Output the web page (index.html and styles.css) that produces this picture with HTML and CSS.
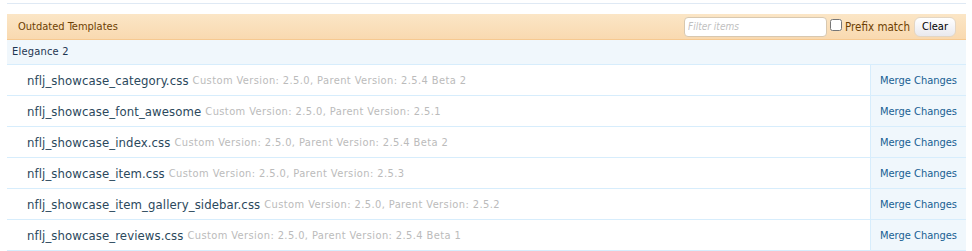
FILE: index.html
```html
<!DOCTYPE html>
<html lang="en">
<head>
  <meta charset="UTF-8" />
  <title>Outdated Templates</title>
  <link rel="stylesheet" href="styles.css">
</head>
<body>
  <div class="topline"></div>

  <div class="block">
    <div class="blockHead">
      <span class="blockTitle">Outdated Templates</span>
      <div class="filter">
        <input type="text" class="filterInput" placeholder="Filter items">
        <label class="prefix"><input type="checkbox"> Prefix match</label>
        <button class="clearBtn">Clear</button>
      </div>
    </div>

    <div class="groupHead">Elegance 2</div>

    <ol class="list">
      <li class="item">
        <div class="itemMain"><a class="name" href="#">nflj_showcase_category.css</a> <span class="meta">Custom Version: 2.5.0, Parent Version: 2.5.4 Beta 2</span></div>
        <a class="action" href="#">Merge Changes</a>
      </li>
      <li class="item">
        <div class="itemMain"><a class="name" href="#">nflj_showcase_font_awesome</a> <span class="meta">Custom Version: 2.5.0, Parent Version: 2.5.1</span></div>
        <a class="action" href="#">Merge Changes</a>
      </li>
      <li class="item">
        <div class="itemMain"><a class="name" href="#">nflj_showcase_index.css</a> <span class="meta">Custom Version: 2.5.0, Parent Version: 2.5.4 Beta 2</span></div>
        <a class="action" href="#">Merge Changes</a>
      </li>
      <li class="item">
        <div class="itemMain"><a class="name" href="#">nflj_showcase_item.css</a> <span class="meta">Custom Version: 2.5.0, Parent Version: 2.5.3</span></div>
        <a class="action" href="#">Merge Changes</a>
      </li>
      <li class="item">
        <div class="itemMain"><a class="name" href="#">nflj_showcase_item_gallery_sidebar.css</a> <span class="meta">Custom Version: 2.5.0, Parent Version: 2.5.2</span></div>
        <a class="action" href="#">Merge Changes</a>
      </li>
      <li class="item">
        <div class="itemMain"><a class="name" href="#">nflj_showcase_reviews.css</a> <span class="meta">Custom Version: 2.5.0, Parent Version: 2.5.4 Beta 1</span></div>
        <a class="action" href="#">Merge Changes</a>
      </li>
    </ol>
  </div>
</body>
</html>
```

FILE: styles.css
```css
body {
  margin: 0;
  padding: 0 6px 0 7px;
  background: #fff;
  font-family: 'DejaVu Sans Condensed', 'DejaVu Sans', sans-serif;
  font-size: 11px;
  color: #2d2d2d;
}

a {
  text-decoration: none;
}

.topline {
  height: 3px;
  border-bottom: 1px solid #dfe9f4;
}

.block {
  margin-top: 10px;
}

.blockHead {
  display: flex;
  align-items: center;
  justify-content: space-between;
  height: 25px;
  padding: 0 10px 0 11px;
  background: linear-gradient(#fbe6c6, #f9d9b0);
  border-bottom: 1px solid #f6c991;
}

.blockTitle {
  color: #6d3f03;
}

.filter {
  display: flex;
  align-items: center;
}

.filterInput {
  box-sizing: border-box;
  width: 143px;
  height: 20px;
  margin: 0;
  padding: 1px 3px;
  border: 1px solid #d8c8b0;
  border-radius: 4px;
  background: #fff;
  font-family: inherit;
  font-size: 10px;
}

.filterInput::placeholder {
  color: #c0c0c0;
  font-style: italic;
}

.prefix {
  display: flex;
  align-items: center;
  margin-left: 3px;
  color: #6d3f03;
  font-size: 11.5px;
}

.prefix input {
  width: 12px;
  height: 12px;
  margin: 0 3px 4px 0;
}

.clearBtn {
  box-sizing: border-box;
  height: 20px;
  margin-left: 4px;
  padding: 0 7px;
  border: 1px solid #e3d6c4;
  border-radius: 6px;
  background: linear-gradient(#ffffff, #e9e9ee);
  font-family: inherit;
  font-size: 11px;
  color: #000;
}

.groupHead {
  height: 24px;
  line-height: 24px;
  padding-left: 5px;
  background: #f0f7fc;
  border-bottom: 1px solid #d7edfc;
  color: #1d3652;
  letter-spacing: 0.2px;
}

.list {
  list-style: none;
  margin: 0;
  padding: 0;
}

.item {
  display: flex;
  height: 30px;
  border-bottom: 1px solid #d7edfc;
}

.itemMain {
  flex: 1;
  display: flex;
  align-items: center;
  gap: 4px;
  padding-left: 20px;
  white-space: nowrap;
}

.name {
  font-size: 13px;
  letter-spacing: 0.1px;
  color: #2b485c;
}

.meta {
  color: #bbbbbb;
  font-size: 11px;
  letter-spacing: 0.4px;
}

.action {
  display: flex;
  align-items: center;
  justify-content: center;
  width: 95px;
  background: #f0f7fc;
  border-left: 1px solid #d7edfc;
  color: #176093;
}
```
